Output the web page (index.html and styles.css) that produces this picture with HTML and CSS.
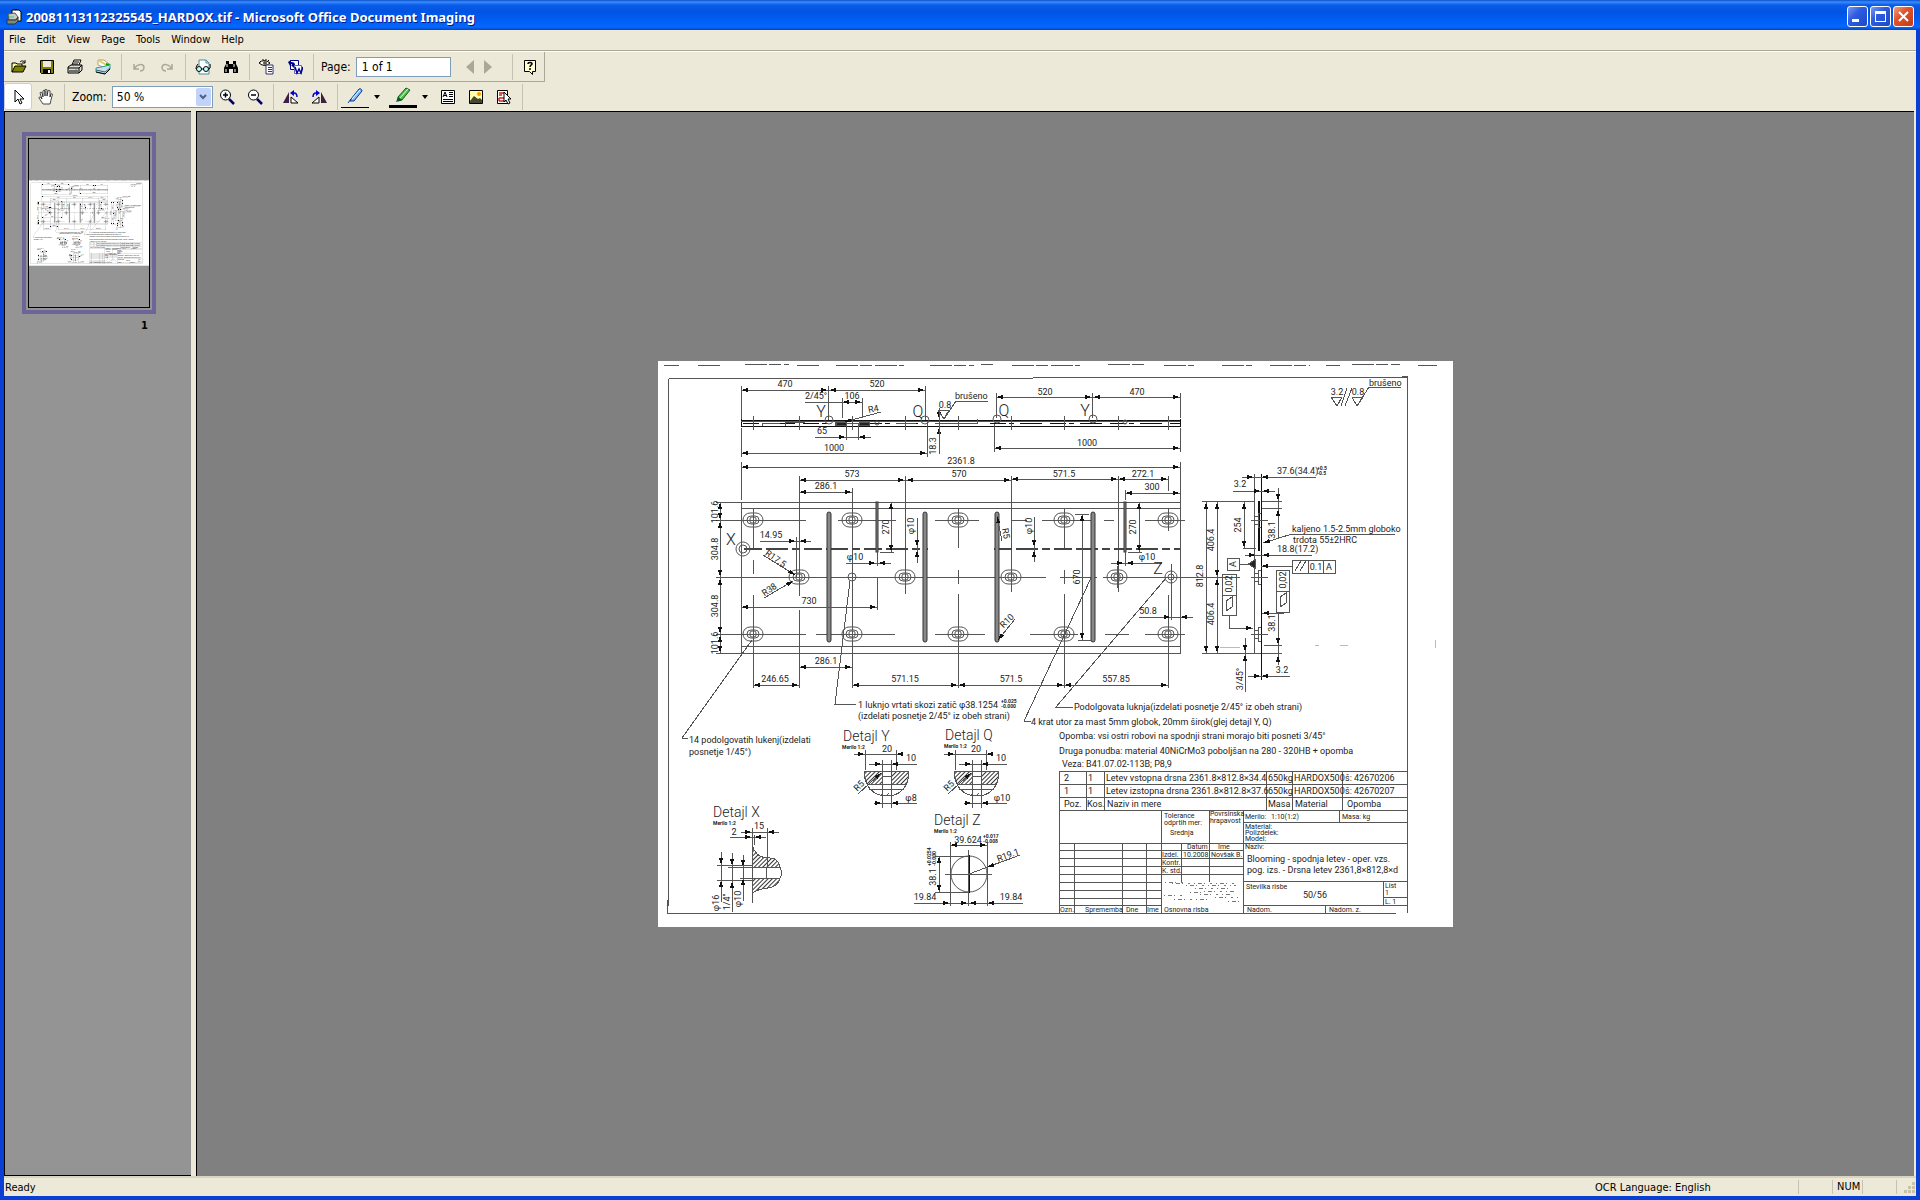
FILE: index.html
```html
<!DOCTYPE html>
<html lang="en">
<head>
  <meta charset="UTF-8">
  <meta name="viewport" content="width=device-width, initial-scale=1.0">
  <title>20081113112325545_HARDOX.tif - Microsoft Office Document Imaging</title>
  <link rel="stylesheet" href="styles.css">
</head>
<body>
  <div class="window">
    <header class="titlebar">
      <svg class="app-icon" viewBox="0 0 16 16">
        <path d="M6 1h5l2 2v8H6z" fill="#fff" stroke="#000"/>
        <path d="M9 1h4l2 2v9h-3" fill="#fff" stroke="#000"/>
        <path d="M2 5l7-1 3 4-2 3H3z" fill="#c8ccc0" stroke="#555"/>
        <path d="M1 11h9l2-3v4l-3 3H1z" fill="#7d8a80" stroke="#333"/>
        <path d="M3 8h5" stroke="#3c9" />
      </svg>
      <h1>20081113112325545_HARDOX.tif - Microsoft Office Document Imaging</h1>
      <div class="window-buttons">
        <button aria-label="Minimize"><svg viewBox="0 0 19 19"><path d="M4 12h7v3H4z" fill="#fff"/></svg></button>
        <button aria-label="Maximize"><svg viewBox="0 0 19 19"><path d="M4 4h11v11H4zM5 7v7h9V7z" fill="#fff" fill-rule="evenodd"/></svg></button>
        <button class="close" aria-label="Close"><svg viewBox="0 0 19 19"><path d="M5 5l9 9M14 5l-9 9" stroke="#fff" stroke-width="2"/></svg></button>
      </div>
    </header>

    <nav class="menubar">
      <button>File</button>
      <button>Edit</button>
      <button>View</button>
      <button>Page</button>
      <button>Tools</button>
      <button>Window</button>
      <button>Help</button>
    </nav>

    <div class="toolbars">
      <div class="toolbar standard">
        <button aria-label="Open"><svg viewBox="0 0 16 16"><path d="M1 13V4h4l1 1h5v2" fill="#ffffa0" stroke="#000"/><path d="M1 13l3-6h11l-3 6z" fill="#808000" stroke="#000"/><path d="M9 3c2-2 4-1 5 1M14 1v3h-3" fill="none" stroke="#000"/></svg></button>
        <button aria-label="Save"><svg viewBox="0 0 16 16"><path d="M1.500 1.500h13v13h-12l-1-1z" fill="#808000" stroke="#000"/><path d="M4 2h8v6H4z" fill="#ece9d8"/><path d="M4 10h8v5H4z" fill="#000"/><path d="M9 11h2v3H9z" fill="#fff"/></svg></button>
        <button aria-label="Print"><svg viewBox="0 0 16 16"><path d="M5 6l2-5h7l-2 5" fill="#fff" stroke="#000"/><path d="M7 3h5M6 5h5" stroke="#000"/><path d="M1 8l3-2h11v5l-3 3H1z" fill="#dcdcd0" stroke="#000"/><path d="M1 9h11l3-3M12 9v5M2 12h9" fill="none" stroke="#000"/><path d="M8 10.500h2" stroke="#cc0"/></svg></button>
        <button aria-label="Scan"><svg viewBox="0 0 16 16"><path d="M3 1h6l5 4-3 4-8-3z" fill="#fff" stroke="#b0a060"/><path d="M3 1l10 6" stroke="#dc6" stroke-width="2"/><path d="M1 9l10-2 4-2v5l-5 5-9-2z" fill="#cde" stroke="#399"/><path d="M1 11l9 2 5-4" stroke="#366" fill="none"/><path d="M1 13l9 2 5-5" stroke="#000" fill="none"/><path d="M11 5l3 1" stroke="#0a0" stroke-width="2"/></svg></button>
        <span class="separator"></span>
        <button aria-label="Undo" disabled><svg viewBox="0 0 16 16"><path d="M3 5v5h5M3 10c3-5 9-6 10-2 0 3-2 4-4 4" fill="none" stroke="#aca899" stroke-width="1.500"/></svg></button>
        <button aria-label="Redo" disabled><svg viewBox="0 0 16 16"><path d="M13 5v5H8M13 10C10 5 4 4 3 8c0 3 2 4 4 4" fill="none" stroke="#aca899" stroke-width="1.500"/></svg></button>
        <span class="separator"></span>
        <button aria-label="Reading view"><svg viewBox="0 0 16 16"><path d="M4 7V1h7l3 3v11H4v-3" fill="#fff" stroke="#4a8a96"/><path d="M11 1v3h3" fill="none" stroke="#4a8a96"/><path d="M1 10c0-2 1-4 2-5M14 10c2-1 1-4 1-5M6 10h3" fill="none" stroke="#000"/><circle cx="4" cy="10" r="2.500" fill="#bff" stroke="#000"/><circle cx="11" cy="10" r="2.500" fill="#bff" stroke="#000"/></svg></button>
        <button aria-label="Find"><svg viewBox="0 0 16 16"><path d="M3 2h3v3h4V2h3v3l2 4v5h-5v-4H6v4H1V9l2-4z"/><path d="M4 5v3M11 5v3M3 10v3M12 10v3" stroke="#fff"/></svg></button>
        <span class="separator"></span>
        <button aria-label="Recognize text"><svg viewBox="0 0 16 16"><path d="M0 4q5-5 11 0-5 5-11 0z" fill="#fff" stroke="#000"/><circle cx="6" cy="4" r="2" fill="#654"/><path d="M1 2l1 1M4 0v1M7 0v1M10 1L9 2" stroke="#000"/><path d="M7 6h7v9H7z" fill="#fff" stroke="#336"/><path d="M9 8.500h4M9 10.500h4M9 12.500h4" stroke="#22f"/></svg></button>
        <button aria-label="Send to Word"><svg viewBox="0 0 16 16"><path d="M3.500 1.500h8v9h-8z" fill="#fff" stroke="#008"/><path d="M1 3l3-2v2c3 0 4 1 4 3h2L7 9 4 6h1c0-1 0-1-2-1v2z" fill="#008"/><path d="M7.500 6.500h7v8h-7z" fill="#fff" stroke="#66a"/><path d="M8 8l2 6 2-4 2 4 2-6" fill="none" stroke="#009" stroke-width="1.500"/></svg></button>
        <span class="separator"></span>
        <label for="page">Page:</label>
        <input type="text" id="page" value="1 of 1">
        <button class="step prev" aria-label="Previous page" disabled><svg viewBox="0 0 16 16"><path d="M12 1v14L4 8z" fill="#aca899"/></svg></button>
        <button class="step" aria-label="Next page" disabled><svg viewBox="0 0 16 16"><path d="M4 1v14l8-7z" fill="#aca899"/></svg></button>
        <span class="separator help-separator"></span>
        <button aria-label="Help"><svg viewBox="0 0 16 16"><path d="M2.500 1.500h11v11h-3v3l-3-3h-5z" fill="#ffffd0" stroke="#000"/><path d="M6 5c0-2 4-2 4 0 0 1-2 1-2 3M8 9v2" stroke="#000" stroke-width="1.500" fill="none"/></svg></button>
      </div>

      <div class="toolbar view">
        <button class="selected" aria-label="Select"><svg viewBox="0 0 16 16"><path d="M5 1v12l3-3 2 5 2-1-2-4h4z" fill="#fff" stroke="#000"/></svg></button>
        <button aria-label="Pan"><svg viewBox="0 0 16 16"><path d="M5 15l-4-6c0-2 2-1 3 1L2 4c0-1 2-1 2 0l1 4V2c0-1 2-1 2 0v5-6c0-1 2-1 2 0v6l1-5c0-1 2-1 2 0v6l1-3c1-1 2 0 1 2l-2 8z" fill="#fff" stroke="#000" stroke-width=".7"/></svg></button>
        <span class="separator"></span>
        <label for="zoom">Zoom:</label>
        <div class="combo">
          <select id="zoom">
            <option>50 %</option>
            <option>100 %</option>
          </select>
          <span class="combo-arrow"><svg viewBox="0 0 8 6"><path d="M1 1l3 3 3-3" fill="none" stroke="#4d6185" stroke-width="2"/></svg></span>
        </div>
        <button aria-label="Zoom in"><svg viewBox="0 0 16 16"><circle cx="6.500" cy="6" r="5" fill="#fff" stroke="#000"/><path d="M4 6h5M6.500 3.500v5" stroke="#000" stroke-width="1.500"/><path d="M10 10l5 5" stroke="#006" stroke-width="2.500"/></svg></button>
        <button aria-label="Zoom out"><svg viewBox="0 0 16 16"><circle cx="6.500" cy="6" r="5" fill="#fff" stroke="#000"/><path d="M4 6h5" stroke="#000" stroke-width="1.500"/><path d="M10 10l5 5" stroke="#006" stroke-width="2.500"/></svg></button>
        <span class="separator"></span>
        <button aria-label="Rotate left"><svg viewBox="0 0 16 16"><path d="M0 14L6 3v11z" fill="#402040"/><path d="M8 8v6h7z" fill="#fff" stroke="#000"/><path d="M8 4h3c2 0 3 1 3 4" fill="none" stroke="#00c" stroke-width="1.500"/><path d="M11 1v6L7 4z" fill="#00c"/></svg></button>
        <button aria-label="Rotate right"><svg viewBox="0 0 16 16"><path d="M16 14L10 3v11z" fill="#402040"/><path d="M8 8v6H1z" fill="#fff" stroke="#000"/><path d="M8 4H5C3 4 2 5 2 8" fill="none" stroke="#00c" stroke-width="1.500"/><path d="M5 1v6l4-3z" fill="#00c"/></svg></button>
        <span class="separator"></span>
        <button class="ink pen" aria-label="Pen"><svg viewBox="0 0 16 16"><path d="M1 15l3-4M4 11L12 1c2-1 3 1 3 2L7 13l-4 0z" fill="#7cb8ff" stroke="#003a9c"/><path d="M5 11l8-9" stroke="#fff"/></svg></button>
        <button class="drop" aria-label="Pen options"><svg viewBox="0 0 6 4"><path d="M0 0h6L3 4z"/></svg></button>
        <button class="ink highlighter" aria-label="Highlighter"><svg viewBox="0 0 16 16"><path d="M3 10L11 1l4 2-8 10-4 1z" fill="#4fc04a" stroke="#175c17"/><path d="M5 11l8-9" stroke="#dfd"/><path d="M1 15l2-5 4 3z" fill="#053"/></svg></button>
        <button class="drop" aria-label="Highlighter options"><svg viewBox="0 0 6 4"><path d="M0 0h6L3 4z"/></svg></button>
        <button aria-label="Insert text box"><svg viewBox="0 0 16 16"><path d="M1.500 1.500h13v13h-13z" fill="#fff" stroke="#000"/><path d="M3 8l2-5 2 5M4 6.500h3M9 3.500h4M9 5.500h4M9 7.500h4M3 10.500h10M3 12.500h10" fill="none" stroke="#000"/></svg></button>
        <button aria-label="Insert picture"><svg viewBox="0 0 16 16"><path d="M1.500 1.500h13v13h-13z" fill="#ffffa8" stroke="#000"/><circle cx="11" cy="5" r="2" fill="#f90"/><path d="M2 12l4-5 4 3 2-1 2 2v3H2z" fill="#454530"/></svg></button>
        <button aria-label="Select annotations"><svg viewBox="0 0 16 16"><path d="M1.500 1.500h10v13h-10z" fill="#fff" stroke="#000"/><path d="M3 4h6M3 6h3M3 9h6v3H3M3 9v3" fill="none" stroke="#c22" stroke-width="1.500"/><path d="M8 3v10l2-2 2 4 2-1-2-4h3z" fill="#fff" stroke="#000"/></svg></button>
        <span class="separator"></span>
      </div>
    </div>

    <main class="workspace">
      <aside class="thumbnails">
        <figure class="thumbnail">
          <div class="thumbnail-frame">
            <svg class="thumbnail-page" viewBox="658 361 795 566"><use href="#drawing"/></svg>
          </div>
          <figcaption>1</figcaption>
        </figure>
      </aside>
      <section class="viewer">
        <svg class="page" viewBox="658 361 795 566">
          <defs>
            <marker id="arrow" viewBox="0 0 7 4" refX="7" refY="2" markerWidth="7" markerHeight="4" markerUnits="userSpaceOnUse" orient="auto-start-reverse"><path d="M0 0l7 2-7 2z" fill="#111"/></marker>
            <pattern id="hatch" width="3" height="3" patternUnits="userSpaceOnUse" patternTransform="rotate(45)"><rect width="1" height="3" fill="#333"/></pattern>
            <g id="slot">
              <rect x="-10" y="-7" width="20" height="14" rx="7"/>
              <rect x="-6" y="-4" width="12" height="8" rx="4"/>
              <rect x="-3" y="-3" width="6" height="6" rx="2"/>
              <path d="M-14 0h28M0-11v22"/>
            </g>
            <g id="groove"><rect x="-2" y="0" width="4" height="130" rx="2"/></g>
            <g id="bolt"><path d="M-10 0H7M-3-7v14M-3-7H0M-3 7H0M-7-4v8M-7-4h4M-7 4h4"/></g>
            <g id="detail">
              <path d="M864 771h45c0 16-9 25-22 25s-23-9-23-25z"/>
              <path class="hatched" d="M864 771h18v13h-15q-3-6-3-13zM891 771h18q0 8-3 13h-15z"/>
              <path d="M882 776h9M867 784h39M869 789h35M882 760v48M891 760v48M865 750v20M896 750v20M880 796l3-3M886 796l3-3"/>
              <path d="M854 754h48M869 764h48M874 803h43"/>
              <path class="end" d="M856 754h9M903 754h-7M874 764h8M900 764h-9M874 803h8M900 803h-9M858 794l23-21"/>
            </g>
          </defs>

          <g id="drawing">
            <rect class="paper" x="658" y="361" width="795" height="566"/>
            <g class="lines">
              <!-- sheet frame and scan edge -->
              <path d="M664 365h15M698 365h22M745 364h44M797 365h24M836 365h68M930 365h44M981 364h12M1012 365h68M1108 364h36M1164 365h30M1222 365h30M1270 365h40M1326 365h14M1352 364h48M1418 365h19" stroke-dasharray="22 2 12 3"/>
              <path d="M669 379L1407 377V913L668 914z"/>

              <!-- side view -->
              <path class="strong" d="M741 420h439M741 426h439M741 419v8M1180 419v8"/>
              <path class="strong" d="M743 423h90M866 423h60M990 423h190" stroke-dasharray="16 3 5 6 22 8"/>
              <path d="M741 421h439M835 421v5M846 426v-3h12v3M935 423h42M977 419v5M753 416v14M799 416v14M852 416v14M905 416v14M958 416v14M1011 416v14M1064 416v14M1118 416v14M1168 416v14M762 426v-3h18M785 426v-4h20M896 423h20"/>
              <path class="solid" d="M836 422h10v3h-10zM859 422h10v3h-10z"/>
              <circle cx="829" cy="420" r="4"/><circle cx="925" cy="420" r="4"/><circle cx="997" cy="419" r="4"/><circle cx="1093" cy="419" r="4"/>
              <circle cx="877" cy="423" r="2"/><circle cx="1125" cy="422" r="2"/>
              <path d="M741 386v33M828 386v34M925 386v34M842 398v20M862 398v20M846 426v14M858 426v14M741 428v29M927 422v35M996 393v25M1092 393v25M1180 393v25M994 424v28M1180 428v24"/>
              <path class="dim" d="M741 390h87M829 390h96M842 402h20M741 453h186M996 397h96M1093 397h87M994 448h186"/>
              <path d="M805 402h37M815 437h56"/>
              <path class="end" d="M836 437h10M868 437h-10M881 412l-37 10M939 408v11M939 445v-18"/>
              <path d="M939 408v46M938 410h11l-5 9zM944 419l12-18h32"/>

              <!-- plan view -->
              <path d="M741 502h439v151H741zM741 508h439M741 646h439M741 462v38M1180 462v44"/>
              <path class="dim" d="M741 467h439M799 480h106M906 480h105M1011 479h107M1118 479h50M799 492h53M1125 493h55"/>
              <path d="M799 476v120M905 476v118M1011 476v116M1118 476v116M1168 476v15M852 488v60M1125 490v10M753 508v40M753 560v14M753 595v93M799 610v78M852 548v140M958 508v40M958 570v14M958 594v94M1064 508v40M1064 570v14M1064 594v94M1168 595v93"/>
              <path d="M716 502h25M716 520h90M838 520h58M935 520h44M1012 520h15M1042 520h50M1104 520h10M1145 520h40M716 577h330M1060 577h37M1110 577h92M716 634h90M816 634h26M835 634h60M935 634h50M1030 634h20M1105 634h24M1145 634h40M716 653h25"/>
              <path class="centerline" d="M744 549h184M994 549h186" stroke-dasharray="18 4 22 4 8 4"/>
              <use href="#slot" x="753" y="520"/><use href="#slot" x="852" y="520"/><use href="#slot" x="958" y="520"/><use href="#slot" x="1064" y="520"/><use href="#slot" x="1168" y="520"/>
              <use href="#slot" x="799" y="577"/><use href="#slot" x="905" y="577"/><use href="#slot" x="1011" y="577"/><use href="#slot" x="1117" y="577"/>
              <use href="#slot" x="753" y="634"/><use href="#slot" x="852" y="634"/><use href="#slot" x="958" y="634"/><use href="#slot" x="1064" y="634"/><use href="#slot" x="1168" y="634"/>
              <circle cx="852" cy="577" r="4"/><circle cx="1171" cy="577" r="6"/><circle cx="1171" cy="577" r="3"/><circle cx="743" cy="549" r="7"/><circle cx="743" cy="549" r="4"/>
              <g class="groove"><use href="#groove" x="829" y="512"/><use href="#groove" x="925" y="512"/><use href="#groove" x="997" y="512"/><use href="#groove" x="1093" y="512"/>
              <rect x="876" y="502" width="2" height="50"/><rect x="1124" y="502" width="2" height="50"/></g>
              <path class="dim" d="M720 502v18M720 521v56M720 578v56M720 635v18M891 502v50M1082 514v126M1139 502v50M741 607h136M799 667h53M753 685h46M852 685h106M958 685h106M1064 685h104"/>
              <path d="M760 541h51M796 537v40M877 552v14M877 578v32M846 563h45M917 518v45M880 552h14M1034 517v45M1075 514h14M1078 640h14M1111 563h51M1128 552h14M1125 552v14M1139 617h54M1171 564v56"/>
              <path class="end" d="M786 541h10M811 541h-12M763 555l32 20M764 598l29-17M868 563h8M886 563h-8M917 538v9M917 559v-9M1034 538v9M1034 559v-9M1002 541l-5-25M1015 619l-17 21M1116 563h8M1134 563h-8M1162 617h9M1190 617h-10"/>
              <path d="M752 640l-70 98 6 1M850 581l-15 123h21M1091 578l-67 143 7 1M1167 577l-111 130h17"/>

              <!-- end view -->
              <path d="M1202 501h53M1261 501h21M1261 508h21M1202 653h80M1240 577h-38M1264 645h18M1254 474v179M1243 548h13"/>
              <path class="strong" d="M1261 474v206M1258 501v50M1259 501v50"/>
              <use href="#bolt" x="1261" y="520"/><use href="#bolt" x="1261" y="577"/><use href="#bolt" x="1261" y="634"/>
              <path class="dim" d="M1206 502v151M1217 502v75M1217 578v75M1244 502v46"/>
              <path d="M1242 477h74M1233 491h42M1278 488v50M1395 534h-103M1245 555h67M1239 564h9M1292 566h-31M1229 615v13h24M1283 612v1h-21M1278 613v52M1245 638v54M1248 676h42"/>
              <path class="end" d="M1244 477h10M1271 477h-10M1251 491h10M1272 491h-10M1278 491v10M1278 519v-10M1292 534l-29 9M1246 555h10M1272 555h-10M1275 566h-14M1240 628h13M1275 613h-13M1278 635v10M1278 665v-10M1245 642v10M1245 664v-10M1250 676h11M1273 676h-12"/>
              <path class="solid" d="M1248 564l7-4v8z"/>
              <path d="M1227 558h12v12h-12zM1292 560h43v13h-43zM1308 560v13M1323 560v13M1295 571l6-10M1300 571l6-10M1222 574h14v41h-14zM1222 595h14M1276 570h13v42h-13zM1276 591h13M1226 611v-10l6-4v10zM1280 607v-10l6-4v10z"/>
              <path d="M1331 397h11l-5 9zM1341 406l6-18M1345 406l7-18M1352 397h11l-6 9zM1357 406l12-19h32"/>
              <path class="faint" d="M1315 645h4M1340 645h8M1220 647h20M1435 640v8"/>

              <!-- details Y and Q -->
              <use href="#detail"/><use href="#detail" x="90"/>

              <!-- detail X -->
              <path class="hatched" d="M752 845q4 13 16 13 10-1 12 9h-28zM752 878h28q-2 9-12 10-10 1-16 5z"/>
              <path d="M780 867q3 6 0 11M752 828v75M767 828v38M754 835v10M752 867h14v11h-14zM741 832h38M730 837h36M717 865h35M728 867h24M740 878h12M717 880h35M721 852v50M732 853v59M743 855v46"/>
              <path class="end" d="M743 832h9M776 832h-9M743 837h9M762 837h-8M721 856v9M721 890v-10M732 857v9M732 890v-9M743 858v9M743 888v-10"/>

              <!-- detail Z -->
              <circle cx="969" cy="874" r="18"/>
              <path class="strong" d="M968 855v38M969 855v38"/>
              <path d="M945 874h47M950 842v64M987 842v64M968 850v56M935 856h34M935 892h34M914 903h109M1020 855l-51 19"/>
              <path class="dim" d="M950 845h37M939 856v36"/>
              <path class="end" d="M1010 859l-23 8M940 903h10M959 903h9M978 903h-9M1000 903h-13"/>

              <!-- title block -->
              <path d="M1059 771h348M1059 784h348M1059 797h348M1059 810h348M1059 771v142M1086 771v39M1104 771v39M1266 771v39M1292 771v39M1342 771v39"/>
              <path d="M1059 843h348M1161 810v103M1209 810v72M1243 810v103M1243 822h164M1339 810v12M1243 881h164M1243 905h164M1383 881v24M1383 897h24M1325 905v8"/>
              <path d="M1059 850h184M1059 858h184M1059 866h184M1059 874h102M1059 882h102M1161 874h82M1059 890h102M1059 898h102M1059 905h102M1074 843v70M1122 843v70M1146 843v70M1181 843v39"/>
              <path class="specks" d="M1172 883h62M1186 885h50M1165 882h18M1195 888h38M1204 891h32M1200 894h30M1215 897h24M1174 899h38M1164 895h20M1190 892h12M1228 901h12"/>
            </g>

            <g class="labels centered">
              <text x="785" y="387">470</text><text x="877" y="387">520</text><text x="816" y="399">2/45°</text><text x="852" y="399">106</text>
              <text x="945" y="408">0.8</text><text x="822" y="434">65</text><text x="834" y="451">1000</text>
              <text x="1045" y="395">520</text><text x="1137" y="395">470</text><text x="1087" y="446">1000</text>
              <text x="961" y="464">2361.8</text><text x="852" y="477">573</text><text x="959" y="477">570</text><text x="1064" y="477">571.5</text><text x="1143" y="477">272.1</text>
              <text x="826" y="489">286.1</text><text x="1152" y="490">300</text>
              <text x="771" y="538">14.95</text><text x="809" y="604">730</text><text x="855" y="560">φ10</text><text x="1147" y="560">φ10</text><text x="1148" y="614">50.8</text>
              <text x="826" y="664">286.1</text><text x="775" y="682">246.65</text><text x="905" y="682">571.15</text><text x="1011" y="682">571.5</text><text x="1116" y="682">557.85</text>
              <text x="1240" y="487">3.2</text><text x="1282" y="673">3.2</text><text x="1337" y="395">3.2</text><text x="1358" y="395">0.8</text><text x="1316" y="570">0.1</text><text x="1329" y="570">A</text>
              <text x="887" y="752">20</text><text x="911" y="761">10</text><text x="976" y="752">20</text><text x="1001" y="761">10</text><text x="911" y="801">φ8</text><text x="1002" y="801">φ10</text>
              <text x="759" y="829">15</text><text x="734" y="835">2</text><text x="968" y="843">39.624</text><text x="925" y="900">19.84</text><text x="1011" y="900">19.84</text>
              <!-- vertical dimensions -->
              <text transform="translate(936 446) rotate(-90)">18.3</text>
              <text transform="translate(718 512) rotate(-90)">101.6</text>
              <text transform="translate(718 549) rotate(-90)">304.8</text>
              <text transform="translate(718 606) rotate(-90)">304.8</text>
              <text transform="translate(718 643) rotate(-90)">101.6</text>
              <text transform="translate(889 527) rotate(-90)">270</text>
              <text transform="translate(914 526) rotate(-90)">φ10</text>
              <text transform="translate(1032 526) rotate(-90)">φ10</text>
              <text transform="translate(1080 577) rotate(-90)">670</text>
              <text transform="translate(1136 527) rotate(-90)">270</text>
              <text transform="translate(1203 576) rotate(-90)">812.8</text>
              <text transform="translate(1214 540) rotate(-90)">406.4</text>
              <text transform="translate(1214 614) rotate(-90)">406.4</text>
              <text transform="translate(1241 525) rotate(-90)">254</text>
              <text transform="translate(1275 530) rotate(-90)">38.1</text>
              <text transform="translate(1275 623) rotate(-90)">38.1</text>
              <text transform="translate(1243 679) rotate(-90)">3/45°</text>
              <text transform="translate(1236 564) rotate(-90)">A</text>
              <text transform="translate(1232 584) rotate(-90)">0,02</text>
              <text transform="translate(1286 580) rotate(-90)">0,02</text>
              <text transform="translate(719 903) rotate(-90)">φ16</text>
              <text transform="translate(730 902) rotate(-90)">1/4"</text>
              <text transform="translate(741 899) rotate(-90)">φ10</text>
              <text transform="translate(936 877) rotate(-90)">38.1</text>
              <text transform="translate(874 412) rotate(-12)">R4</text>
              <text transform="translate(774 561) rotate(35)">R17.5</text>
              <text transform="translate(771 592) rotate(-35)">R38</text>
              <text transform="translate(1003 534) rotate(80)">R5</text>
              <text transform="translate(1009 623) rotate(-45)">R10</text>
              <text transform="translate(861 788) rotate(-45)">R5</text>
              <text transform="translate(951 788) rotate(-45)">R5</text>
              <text transform="translate(1009 858) rotate(-20)">R19.1</text>
            </g>
            <g class="labels marks centered">
              <text x="821" y="417">Y</text><text x="918" y="417">Q</text><text x="1004" y="416">Q</text><text x="1085" y="416">Y</text><text x="731" y="545">X</text><text x="1158" y="574">Z</text>
            </g>
            <g class="labels">
              <text x="955" y="399">brušeno</text><text x="1369" y="386">brušeno</text>
              <text x="1277" y="474">37.6(34.4)</text><text x="1277" y="552">18.8(17.2)</text>
              <text x="1292" y="532">kaljeno 1.5-2.5mm globoko</text>
              <text x="1293" y="543">trdota 55±2HRC</text>
              <text x="689" y="743">14 podolgovatih lukenj(izdelati</text>
              <text x="689" y="755">posnetje 1/45°)</text>
              <text x="858" y="708">1 luknjo vrtati skozi zatič φ38.1254</text>
              <text x="858" y="719">(izdelati posnetje 2/45° iz obeh strani)</text>
              <text x="1031" y="725">4 krat utor za mast 5mm globok, 20mm širok(glej detajl Y, Q)</text>
              <text x="1074" y="710">Podolgovata luknja(izdelati posnetje 2/45° iz obeh strani)</text>
              <text x="1059" y="739">Opomba: vsi ostri robovi na spodnji strani morajo biti posneti 3/45°</text>
              <text x="1059" y="754">Druga ponudba: material 40NiCrMo3 poboljšan na 280 - 320HB + opomba</text>
              <text x="1062" y="767">Veza: B41.07.02-113B; P8,9</text>
              <text x="1064" y="781">2</text><text x="1088" y="781">1</text><text x="1106" y="781">Letev vstopna drsna 2361.8×812.8×34.4</text><text x="1268" y="781">650kg</text><text x="1294" y="781">HARDOX500</text><text x="1345" y="781">š: 42670206</text>
              <text x="1064" y="794">1</text><text x="1088" y="794">1</text><text x="1106" y="794">Letev izstopna drsna 2361.8×812.8×37.6</text><text x="1268" y="794">650kg</text><text x="1294" y="794">HARDOX500</text><text x="1345" y="794">š: 42670207</text>
              <text x="1064" y="807">Poz.</text><text x="1087" y="807">Kos.</text><text x="1107" y="807">Naziv in mere</text><text x="1268" y="807">Masa</text><text x="1295" y="807">Material</text><text x="1347" y="807">Opomba</text>
              <text x="1247" y="862">Blooming - spodnja letev - oper. vzs.</text>
              <text x="1247" y="873">pog. izs. - Drsna letev 2361,8×812,8×d</text>
              <text x="1303" y="898">50/56</text>
            </g>
            <g class="labels small">
              <text x="1164" y="818">Tolerance</text><text x="1164" y="825">odprtih mer:</text><text x="1170" y="835">Srednja</text>
              <text x="1210" y="816">Povrsinska</text><text x="1210" y="823">hrapavost</text>
              <text x="1245" y="819">Merilo:</text><text x="1271" y="819">1:10(1:2)</text><text x="1342" y="819">Masa: kg</text>
              <text x="1245" y="829">Material:</text><text x="1245" y="835">Polizdelek:</text><text x="1245" y="841">Model:</text><text x="1245" y="849">Naziv:</text>
              <text x="1187" y="849">Datum</text><text x="1218" y="849">Ime</text>
              <text x="1162" y="857">Izdel.</text><text x="1183" y="857">10.2008</text><text x="1211" y="857">Novšak B.</text>
              <text x="1162" y="865">Kontr.</text><text x="1162" y="873">K. std.</text>
              <text x="1246" y="889">Stevilka risbe</text><text x="1385" y="888">List</text><text x="1385" y="895">1</text><text x="1385" y="904">L. 1</text>
              <text x="1060" y="912">Ozn.</text><text x="1085" y="912">Sprememba</text><text x="1126" y="912">Dne</text><text x="1147" y="912">Ime</text><text x="1164" y="912">Osnovna risba</text><text x="1247" y="912">Nadom.</text><text x="1329" y="912">Nadom. z.</text>
            </g>
            <g class="labels heading">
              <text x="843" y="741">Detajl Y</text><text x="945" y="740">Detajl Q</text><text x="713" y="817">Detajl X</text><text x="934" y="825">Detajl Z</text>
            </g>
            <g class="labels tiny">
              <text x="842" y="749">Merilo 1:2</text><text x="944" y="748">Merilo 1:2</text><text x="713" y="825">Merilo 1:2</text><text x="934" y="833">Merilo 1:2</text>
              <text x="1317" y="470">+0.5</text><text x="1317" y="475">-0.5</text>
              <text x="1001" y="703">+0.025</text><text x="1001" y="708">-0.000</text>
              <text x="983" y="838">+0.017</text><text x="983" y="843">-0.008</text>
              <text transform="translate(931 866) rotate(-90)">+0.0254</text><text transform="translate(936 866) rotate(-90)">-0.000</text>
            </g>
          </g>
        </svg>
      </section>
    </main>

    <footer class="statusbar">
      <span class="message">Ready</span>
      <span class="language">OCR Language: English</span>
      <span class="cell"></span>
      <span class="cell num">NUM</span>
      <span class="cell"></span>
      <span class="cell grip"><svg viewBox="0 0 12 12"><path d="M8 0h3v3H8zM4 4h3v3H4zM8 4h3v3H8zM0 8h3v3H0zM4 8h3v3H4zM8 8h3v3H8z" fill="#c8c2a8"/></svg></span>
    </footer>
  </div>
  <script src="drawing.js"></script>
</body>
</html>
```
FILE: styles.css
```css
:root {
  --face: #ece9d8;
  --shadow: #aca899;
  --blue: #0a3fd6;
  --field-border: #7f9db9;
  --ink: #222;
}
* {
  box-sizing: border-box;
}
body {
  margin: 0;
  font-family: "DejaVu Sans Condensed", "Noto Sans", sans-serif;
  font-size: 11px;
  color: #000;
}
button {
  margin: 0;
  padding: 0;
  border: none;
  background: none;
  font: inherit;
  color: inherit;
}
.window {
  display: flex;
  flex-direction: column;
  height: 100vh;
  background-color: var(--face);
  border: 4px solid var(--blue);
  border-top: none;
}

/* title bar */
.titlebar {
  display: flex;
  align-items: center;
  flex: none;
  height: 30px;
  margin: 0 -4px;
  padding: 3px 6px 0 6px;
  background: linear-gradient(#0a50c8 0, #3a8cff 2px, #0a5ce8 5px, #0054e3 12px, #0060f8 22px, #0668ff 27px, #0444c0 30px);
}
.app-icon {
  width: 16px;
  height: 16px;
}
.titlebar h1 {
  flex: 1;
  margin: 0 0 0 4px;
  font-family: "Noto Sans", "Open Sans", sans-serif;
  font-size: 13px;
  font-weight: bold;
  color: #fff;
  text-shadow: 1px 1px #0a1883;
}
.window-buttons {
  display: flex;
  gap: 2px;
}
.window-buttons button {
  width: 21px;
  height: 21px;
  border: 1px solid #fff;
  border-radius: 3px;
  background: linear-gradient(135deg, #7a9cf0, #2f5be0 40%, #1c49c8);
}
.window-buttons .close {
  background: linear-gradient(135deg, #f0a080, #e0532c 40%, #c43a14);
}
.window-buttons svg {
  display: block;
  width: 19px;
  height: 19px;
}

/* menu bar */
.menubar {
  display: flex;
  flex: none;
  gap: 11px;
  height: 21px;
  padding: 0 5px 2px;
  border-bottom: 1px solid var(--shadow);
}

/* toolbars */
.toolbars {
  flex: none;
  height: 60px;
  border-top: 1px solid #fff;
}
.toolbar {
  display: flex;
  align-items: center;
  width: max-content;
  height: 29px;
}
.toolbar.standard {
  height: 30px;
  padding-left: 1px;
  border-right: 1px solid var(--shadow);
  border-bottom: 1px solid var(--shadow);
}
.toolbar button {
  display: flex;
  align-items: center;
  justify-content: center;
  width: 28px;
  height: 27px;
}
.toolbar button svg {
  width: 16px;
  height: 16px;
}
.toolbar label {
  margin: 0 5px 0 4px;
  font-size: 12px;
}
.toolbar .selected {
  background-color: #fff;
  border: 1px solid #c4d0dc;
  border-radius: 3px;
}
.toolbar .step {
  width: 18px;
}
.toolbar .prev {
  margin-left: 10px;
}
.separator {
  width: 1px;
  height: 26px;
  margin: 0 3px 0 4px;
  background-color: #c5c2b0;
}
.help-separator {
  margin-left: 15px;
}
.toolbar input {
  width: 95px;
  height: 20px;
  padding: 0 5px;
  border: 1px solid var(--field-border);
  background-color: #fff;
  font: inherit;
  font-size: 12px;
}
.combo {
  position: relative;
  width: 101px;
  height: 22px;
}
.combo select {
  width: 100%;
  height: 100%;
  padding: 0 4px;
  border: 1px solid var(--field-border);
  border-radius: 0;
  background-color: #fff;
  appearance: none;
  font: inherit;
  font-size: 12px;
  color: #000;
}
.combo-arrow {
  position: absolute;
  top: 2px;
  right: 2px;
  bottom: 2px;
  display: flex;
  align-items: center;
  justify-content: center;
  width: 15px;
  border-radius: 2px;
  background-color: #c1d2fb;
  pointer-events: none;
}
.combo-arrow svg {
  width: 8px;
  height: 6px;
}
.toolbar .ink {
  border-bottom: 1px solid #000;
  height: 23px;
}
.toolbar .highlighter {
  margin-left: 3px;
  border-bottom-width: 3px;
}
.toolbar .drop {
  width: 17px;
}
.toolbar .drop svg {
  width: 6px;
  height: 4px;
}

/* page list and viewer */
.workspace {
  display: flex;
  flex: 1;
  min-height: 0;
  padding-right: 2px;
}
.thumbnails {
  flex: none;
  width: 187px;
  padding: 20px 0 0 17px;
  background-color: #949494;
  border: 1px solid #000;
  border-right: none;
}
.thumbnail {
  width: 134px;
  margin: 0;
}
.thumbnail-frame {
  position: relative;
  display: flex;
  align-items: center;
  justify-content: center;
  height: 182px;
  border: 4px solid #6b6599;
}
.thumbnail-frame::after {
  content: "";
  position: absolute;
  inset: 2px;
  border: 1px solid #000;
}
.thumbnail-page {
  width: 120px;
  height: 86px;
}
.thumbnail figcaption {
  padding: 5px 8px 0 0;
  font-weight: bold;
  text-align: right;
}
.viewer {
  display: flex;
  align-items: center;
  justify-content: center;
  flex: 1;
  margin-left: 5px;
  background-color: #808080;
  border: 1px solid #000;
  border-right: none;
  border-bottom: none;
}
.page {
  width: 795px;
  height: 566px;
}

/* drawing */
.page path {
  shape-rendering: crispEdges;
}
.paper {
  fill: #fff;
}
.lines {
  fill: none;
  stroke: #555;
  stroke-width: 1px;
}
.strong {
  stroke: #111;
}
.centerline {
  stroke: #444;
  stroke-width: 2px;
}
.dim {
  marker-start: url(#arrow);
  marker-end: url(#arrow);
}
.end {
  marker-end: url(#arrow);
}
.solid {
  fill: #222;
}
.hatched {
  fill: url(#hatch);
}
.groove {
  fill: #888;
  stroke: #333;
}
.faint {
  stroke: #bbb;
}
.specks {
  stroke: #777;
  stroke-dasharray: 1 3 4 2 1 5 2 4;
}
.labels {
  fill: var(--ink);
  font-family: Roboto, "Liberation Sans", sans-serif;
  font-size: 9px;
}
.labels.centered {
  text-anchor: middle;
}
.labels.marks {
  font-size: 16px;
  font-weight: 300;
}
.labels.heading {
  font-size: 14px;
  font-weight: 300;
}
.labels.small {
  font-size: 7px;
}
.labels.tiny {
  font-size: 5px;
  font-weight: bold;
}

/* status bar */
.statusbar {
  display: flex;
  align-items: center;
  flex: none;
  height: 20px;
  border-top: 2px solid #d8d4c0;
}
.message {
  flex: 1;
  padding-left: 1px;
}
.language {
  width: 203px;
}
.cell {
  width: 34px;
  height: 14px;
  border-left: 1px solid #c5c2b0;
}
.cell.num {
  width: 30px;
  padding-left: 4px;
}
.cell.grip {
  width: 20px;
  padding: 2px 0 0 7px;
}
.grip svg {
  display: block;
  width: 12px;
  height: 12px;
}
```
FILE: drawing.js
```js
// markers only land on the ends of a whole path, so give every dimension line its own
document.querySelectorAll('.page .dim, .page .end').forEach(path => {
  path.getAttribute('d').split(/(?=M)/).forEach(d => {
    const line = path.cloneNode();
    line.setAttribute('d', d);
    path.before(line);
  });
  path.remove();
});
```
